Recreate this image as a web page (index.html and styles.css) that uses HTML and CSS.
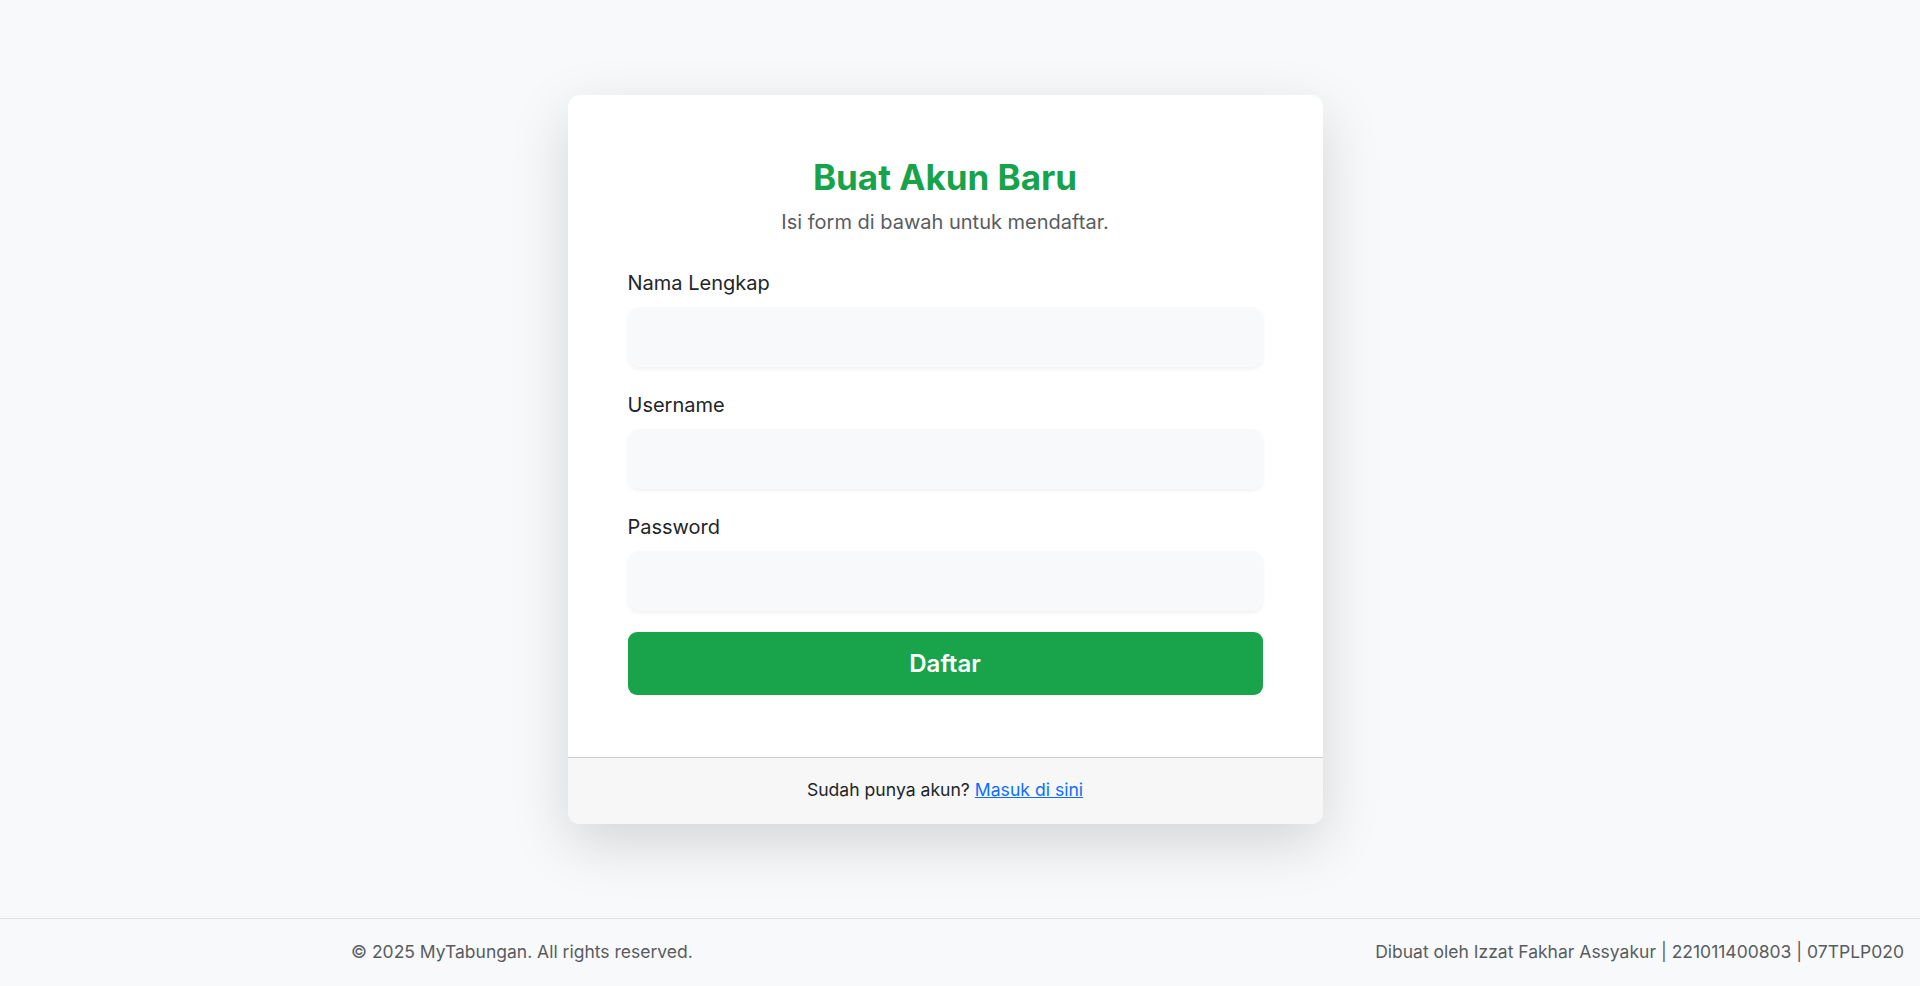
FILE: index.html
```html
<!DOCTYPE html>
<html lang="id">
<head>
<meta charset="utf-8">
<title>Daftar - MyTabungan</title>
<link rel="stylesheet" href="styles.css">
</head>
<body>
<main class="main">
  <div class="card">
    <div class="card-body">
      <h2 class="title">Buat Akun Baru</h2>
      <p class="subtitle">Isi form di bawah untuk mendaftar.</p>
      <form class="form">
        <div class="group">
          <label class="label" for="nama">Nama Lengkap</label>
          <input class="input" id="nama" type="text">
        </div>
        <div class="group">
          <label class="label" for="username">Username</label>
          <input class="input" id="username" type="text">
        </div>
        <div class="group last">
          <label class="label" for="password">Password</label>
          <input class="input" id="password" type="password">
        </div>
        <button class="btn" type="button">Daftar</button>
      </form>
    </div>
    <div class="card-footer">
      Sudah punya akun? <a href="#" class="link">Masuk di sini</a>
    </div>
  </div>
</main>
<footer class="footer">
  <span class="foot-left">© 2025 MyTabungan. All rights reserved.</span>
  <span class="foot-right">Dibuat oleh Izzat Fakhar Assyakur | 221011400803 | 07TPLP020</span>
</footer>
</body>
</html>
```
FILE: styles.css
```css
* { box-sizing: border-box; }
html, body { margin: 0; padding: 0; }
body {
  min-height: 100vh;
  display: flex;
  flex-direction: column;
  background: #f8f9fa;
  font-family: Inter, "Noto Sans", sans-serif;
  color: #212529;
  font-size: 20px;
  line-height: 1.5;
}
.main {
  flex: 1;
  display: flex;
  align-items: center;
  justify-content: center;
  padding-right: 30px;
}
.card {
  width: 755px;
  background: #fff;
  border-radius: 12px;
  box-shadow: 0 19px 58px rgba(0,0,0,0.15);
  overflow: hidden;
}
.card-body {
  padding: 61px 60px 62px;
}
.title {
  margin: 0 0 9px;
  text-align: center;
  color: #16a34a;
  font-size: 35px;
  font-weight: 700;
  line-height: 1.2;
}
.subtitle {
  margin: 0 0 31px;
  text-align: center;
  color: #595c5f;
  font-size: 20px;
}
.form { display: flex; flex-direction: column; }
.group { display: flex; flex-direction: column; margin-bottom: 23px; }
.group.last { margin-bottom: 21px; }
.label {
  display: block;
  margin-bottom: 9px;
  font-size: 20px;
  color: #212529;
}
.input {
  height: 60px;
  width: 100%;
  border: none;
  border-radius: 12px;
  background: #f8f9fa;
  box-shadow: 0 2px 4px rgba(0,0,0,0.06);
  font: inherit;
  padding: 0 20px;
}
.btn {
  height: 63px;
  width: 100%;
  border: none;
  border-radius: 9px;
  background: #19a34b;
  color: #fff;
  font-family: Inter, "Noto Sans", sans-serif;
  font-size: 24px;
  font-weight: 600;
}
.card-footer {
  border-top: 1px solid #cfcfcf;
  background: #f7f7f7;
  height: 67px;
  display: flex;
  align-items: center;
  justify-content: center;
  font-size: 17.6px;
  color: #212529;
}
.link { color: #0d6efd; text-decoration: underline; margin-left: 5px; }
.footer {
  border-top: 1px solid #dee2e6;
  height: 68px;
  display: flex;
  align-items: center;
  justify-content: space-between;
  padding: 0 16px 0 351px;
  color: #595c5f;
  font-size: 17.5px;
}
```
